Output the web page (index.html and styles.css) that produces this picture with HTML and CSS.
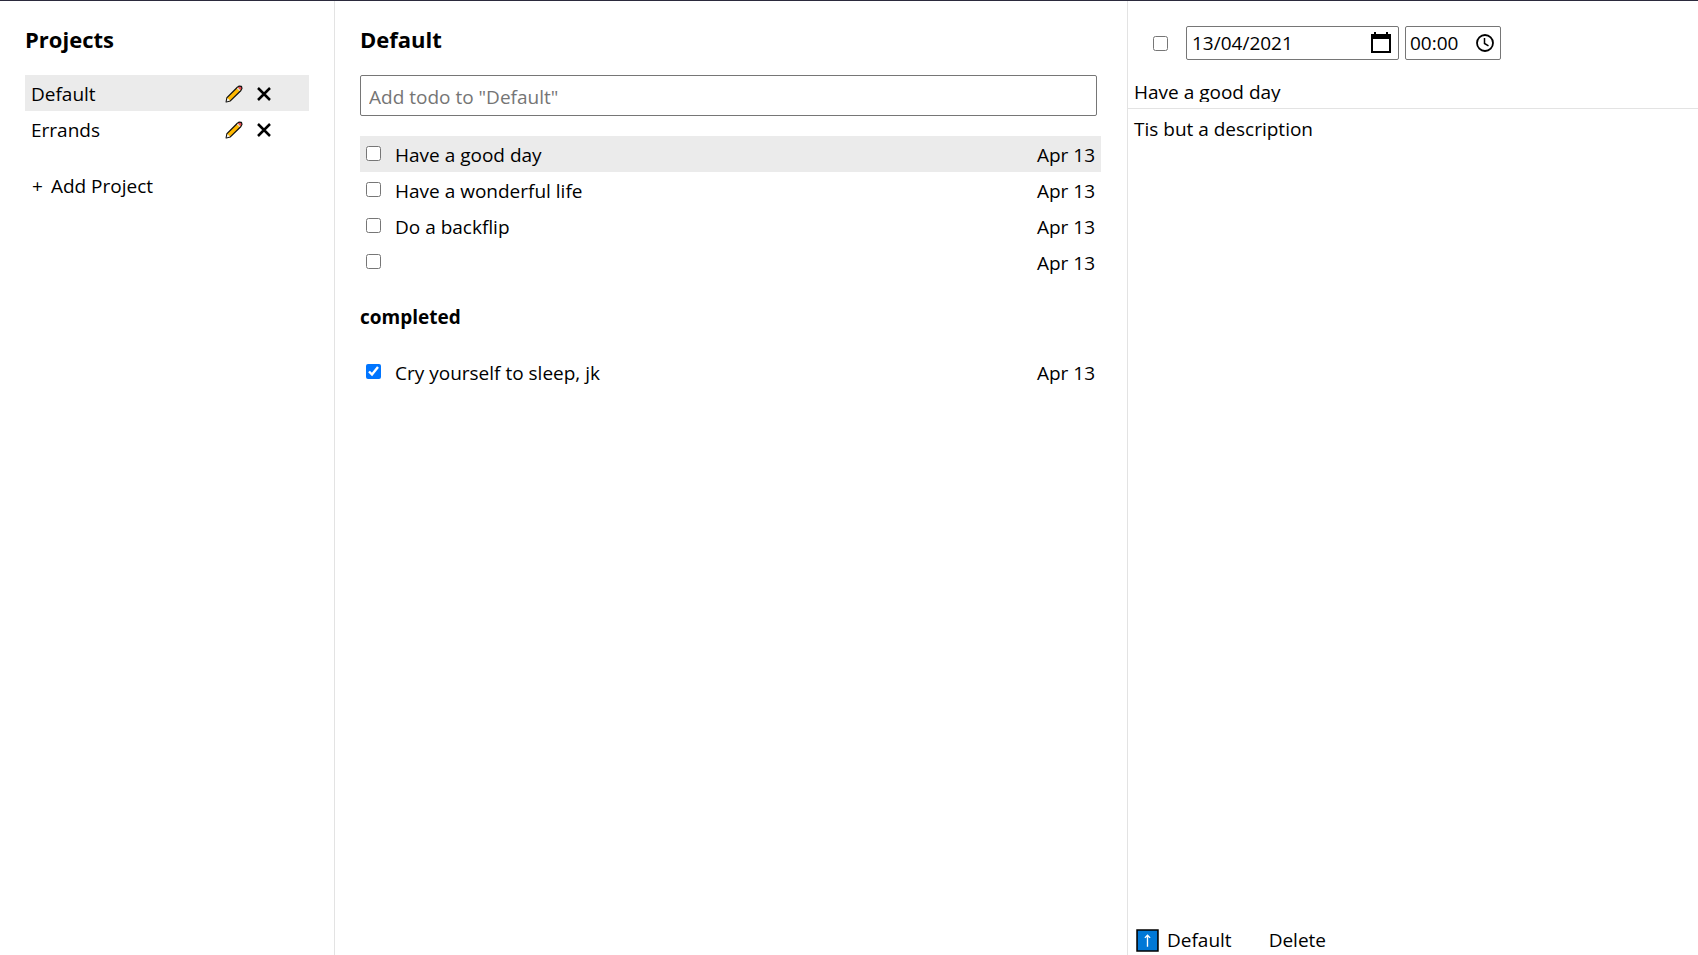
FILE: index.html
```html
<!DOCTYPE html>
<html lang="en">
<head>
<meta charset="utf-8">
<title>Todo</title>
<link rel="stylesheet" href="styles.css">
</head>
<body>
<svg class="sprite" aria-hidden="true">
  <symbol id="pencil" viewBox="0 0 18 18">
    <path d="M1.2 16.8 2 12.6 12.4 2.2 14.2 1.1 16.4 1.3 16.9 3.4 15.7 5.7 5.3 15.9Z" fill="#ffb900" stroke="#111" stroke-width="1.3" stroke-linejoin="round"/>
    <path d="M1.6 16.4 2.5 13 5 15.5Z" fill="#f2f2f2"/>
    <path d="M11.9 3.6 13 2.6 15.4 5 14.4 6.1Z" fill="#ddd"/>
    <path d="M13 2.6 14.4 1.7 16 1.9 16.3 3.4 15.4 5Z" fill="#e74856"/>
  </symbol>
  <symbol id="cross" viewBox="0 0 16 16">
    <path d="M2 2 14 14M14 2 2 14" fill="none" stroke="#000" stroke-width="2.5"/>
  </symbol>
</svg>
<div class="app">
  <nav class="sidebar">
    <h2 class="title">Projects</h2>
    <ul class="list">
      <li class="row project selected">
        <span class="name">Default</span>
        <button class="icon-button" aria-label="Rename Default"><svg class="pencil"><use href="#pencil"/></svg></button>
        <button class="icon-button" aria-label="Remove Default"><svg class="cross"><use href="#cross"/></svg></button>
      </li>
      <li class="row project">
        <span class="name">Errands</span>
        <button class="icon-button" aria-label="Rename Errands"><svg class="pencil"><use href="#pencil"/></svg></button>
        <button class="icon-button" aria-label="Remove Errands"><svg class="cross"><use href="#cross"/></svg></button>
      </li>
    </ul>
    <button class="text-button add-project"><span>+</span><span>Add Project</span></button>
  </nav>
  <main class="todos">
    <h2 class="title">Default</h2>
    <input class="new-todo" type="text" placeholder="Add todo to &quot;Default&quot;" aria-label="New todo">
    <ul class="list">
      <li class="row selected"><input class="check" type="checkbox" id="t1"><label class="name" for="t1">Have a good day</label><span>Apr 13</span></li>
      <li class="row"><input class="check" type="checkbox" id="t2"><label class="name" for="t2">Have a wonderful life</label><span>Apr 13</span></li>
      <li class="row"><input class="check" type="checkbox" id="t3"><label class="name" for="t3">Do a backflip</label><span>Apr 13</span></li>
      <li class="row"><input class="check" type="checkbox" id="t4"><label class="name" for="t4"></label><span>Apr 13</span></li>
    </ul>
    <h3 class="subtitle">completed</h3>
    <ul class="list">
      <li class="row"><input class="check" type="checkbox" id="t5" checked><label class="name" for="t5">Cry yourself to sleep, jk</label><span>Apr 13</span></li>
    </ul>
  </main>
  <aside class="detail">
    <div class="schedule">
      <input class="check" type="checkbox" aria-label="Done">
      <div class="field date">
        <input class="field-input" type="text" value="13/04/2021" aria-label="Date">
        <svg class="field-icon" viewBox="0 0 20 22"><path d="M1 3h18v17H1z" fill="none" stroke="#000" stroke-width="2"/><path d="M0 2h20v5H0zM3 0h2v3H3zM15 0h2v3h-2z"/></svg>
      </div>
      <div class="field time">
        <input class="field-input" type="text" value="00:00" aria-label="Time">
        <svg class="field-icon" viewBox="0 0 20 22"><circle cx="10" cy="11" r="8" fill="none" stroke="#000" stroke-width="1.8"/><path d="M9.5 6v5.5l4 2.3" fill="none" stroke="#000" stroke-width="1.5"/></svg>
      </div>
    </div>
    <div class="title-bar">
      <input class="todo-title" type="text" value="Have a good day" aria-label="Title">
    </div>
    <textarea class="description" aria-label="Description">Tis but a description</textarea>
    <footer class="actions">
      <button class="text-button move"><svg class="arrow" viewBox="0 0 22 22"><path d="M1 1h20v20H1z" fill="#0078d7" stroke="#000" stroke-width="1.5"/><path d="M11 17V6M8.500 8.500 11 6l2.500 2.500" fill="none" stroke="#fff" stroke-width="1.300"/></svg>Default</button>
      <button class="text-button">Delete</button>
    </footer>
  </aside>
</div>
</body>
</html>
```
FILE: styles.css
```css
* { box-sizing: border-box; }

body, input, textarea, button {
  font-family: "Open Sans", "Noto Sans", sans-serif;
  font-size: 19px;
  line-height: 26px;
  color: #000;
}

body { margin: 0; background: #fff; }

.sprite { display: none; }

.app {
  display: grid;
  grid-template-columns: 335fr 793fr 570fr;
  min-height: 100vh;
  border-top: 1px solid #2b2a3d;
}

.sidebar, .todos {
  padding: 23px 25px;
  border-right: 1px solid #e3e3e3;
}

.todos { padding-right: 26px; }

.title {
  margin: 0 0 21px;
  font-size: 22px;
  line-height: 30px;
  font-weight: 700;
}

.subtitle {
  margin: 24px 0;
  font-size: 19px;
  line-height: 26px;
  font-weight: 700;
}

.list { margin: 0; padding: 0; list-style: none; }

.row {
  display: flex;
  align-items: center;
  height: 36px;
  padding: 2px 6px 0;
}

.selected { background: #ebebeb; }
.name { flex: 1; }
.project { padding-right: 35px; }

.check {
  flex: none;
  width: 15px;
  height: 15px;
  margin: 0;
}

.row .check { margin: 0 14px 3px 0; }

.icon-button, .text-button {
  display: flex;
  align-items: center;
  padding: 0;
  border: 0;
  background: none;
}

.icon-button {
  justify-content: center;
  width: 20px;
  height: 26px;
  margin-left: 10px;
}

.pencil { width: 18px; height: 18px; }
.cross { width: 16px; height: 16px; }

.add-project {
  gap: 8px;
  margin: 26px 0 0 7px;
}

.new-todo {
  display: block;
  width: calc(100% - 4px);
  height: 41px;
  margin-bottom: 20px;
  padding: 3px 8px 0;
  border: 1px solid #767676;
  border-radius: 2px;
}

.new-todo::placeholder { color: #757575; }

.detail { display: flex; flex-direction: column; }

.schedule {
  display: flex;
  align-items: center;
  padding: 25px 25px 0;
}

.field {
  display: flex;
  align-items: center;
  height: 34px;
  border: 1px solid #767676;
  border-radius: 2px;
}

.date { width: 213px; margin: 0 6px 0 18px; padding: 0 7px 0 5px; }
.time { width: 96px; padding: 0 5px 0 4px; }

.field-input {
  flex: 1;
  min-width: 0;
  padding: 0;
  border: 0;
  background: none;
}

.field-icon { flex: none; width: 20px; height: 22px; }

.title-bar {
  display: flex;
  padding: 16px 6px 6px;
  border-bottom: 1px solid #e3e3e3;
}

.todo-title {
  flex: 1;
  height: 26px;
  padding: 6px 0 0;
  border: 0;
}

.description {
  flex: 1;
  padding: 7px 6px;
  border: 0;
  resize: none;
}

.actions {
  display: flex;
  gap: 37px;
  padding: 0 8px 2px;
}

.arrow { width: 23px; height: 23px; margin-right: 8px; }
```
